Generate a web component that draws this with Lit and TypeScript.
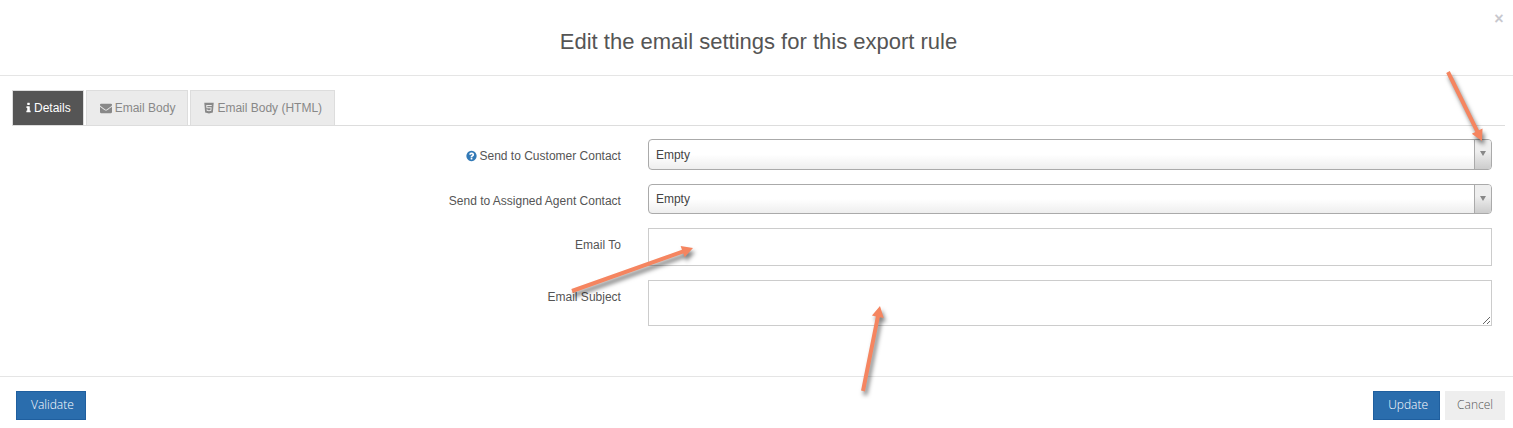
import { LitElement, html, css, svg } from "lit";
import { customElement, state } from "lit/decorators.js";

const icons = {
  info: {
    box: "576 0 640 1792",
    width: 5,
    path: "M1216 1344v128q0 26-19 45t-45 19h-512q-26 0-45-19t-19-45v-128q0-26 19-45t45-19h64v-384h-64q-26 0-45-19t-19-45v-128q0-26 19-45t45-19h384q26 0 45 19t19 45v576h64q26 0 45 19t19 45zm-128-1152v192q0 26-19 45t-45 19h-256q-26 0-45-19t-19-45v-192q0-26 19-45t45-19h256q26 0 45 19t19 45z",
  },
  envelope: {
    box: "0 0 1792 1792",
    width: 12,
    path: "M1792 710v794q0 66-47 113t-113 47h-1472q-66 0-113-47t-47-113v-794q44 49 101 87 362 246 497 345 57 42 92.5 65.5t94.5 48 110 24.5h2q51 0 110-24.500t94.500-48 92.500-65.500q170-123 498-345 57-39 100-87zm0-294q0 79-49 151t-122 123q-376 261-468 325-10 7-42.500 30.500t-54 38-52 32.500-57.500 27-50 9h-2q-23 0-50-9t-57.500-27-52-32.500-54-38-42.500-30.500q-91-64-262-182.500t-205-142.500q-62-42-117-115.500t-55-136.500q0-78 41.500-130t118.500-52h1472q65 0 112.500 47t47.500 113z",
  },
  html5: {
    box: "192 0 1408 1792",
    width: 10,
    path: "M192 128h1408l-128 1438-578 162-574-162zM480 450H1312L1300 590H640L650 800H1285L1240 1290 896 1390 552 1290 535 1090H670L680 1190 896 1250 1112 1190 1140 930H520Z",
  },
  help: {
    box: "128 0 1536 1792",
    width: 11,
    path: "M1024 1376v-192q0-14-9-23t-23-9h-192q-14 0-23 9t-9 23v192q0 14 9 23t23 9h192q14 0 23-9t9-23zm256-672q0-88-55.500-163t-138.500-116-170.500-41q-243 0-371 213-15 24 8 42l132 100q7 6 19 6 16 0 25-12 53-68 86-92 34-24 86-24 48 0 85.500 26t37.500 59q0 38-20 61t-68 45q-63 28-115.500 86.500t-52.500 125.500v36q0 14 9 23t23 9h192q14 0 23-9t9-23q0-19 21.500-49.500t54.500-49.500q32-18 49-28.500t46-35 44.500-48 28-60.500 12.500-81zm384 192q0 209-103 385.500t-279.500 279.500-385.500 103-385.500-103-279.500-279.500-103-385.500 103-385.500 279.500-279.500 385.500-103 385.500 103 279.500 279.500 103 385.500z",
  },
};

type IconName = keyof typeof icons;

const icon = (name: IconName) => html`<svg
  class="icon"
  viewBox=${icons[name].box}
  width=${icons[name].width}
  height="12"
  aria-hidden="true"
>
  <path fill="currentColor" fill-rule="evenodd" d=${icons[name].path} />
</svg>`;

/* Arrow from (x1, y1) to its tip at (x2, y2). */
const arrow = (x1: number, y1: number, x2: number, y2: number) => {
  const length = Math.hypot(x2 - x1, y2 - y1);
  const angle = (Math.atan2(y2 - y1, x2 - x1) * 180) / Math.PI;
  return svg`<path
    fill="#f58560"
    transform="translate(${x1} ${y1}) rotate(${angle})"
    d="M0 -2H${length - 11}V-6L${length} 0L${length - 11} 6V2H0Z"
  />`;
};

const tabs: { icon: IconName; label: string }[] = [
  { icon: "info", label: "Details" },
  { icon: "envelope", label: "Email Body" },
  { icon: "html5", label: "Email Body (HTML)" },
];

@customElement("app-root")
export class AppRoot extends LitElement {
  @state() private active = 0;

  static styles = css`
    :host {
      display: block;
      background: #fff;
      color: #555;
      font: 12px/18px "Liberation Sans", Arial, sans-serif;
    }
    * {
      box-sizing: border-box;
    }
    .header {
      display: grid;
      grid-template-columns: 20px 1fr 20px;
      padding: 10px 4px 19px 8px;
      border-bottom: 1px solid #e5e5e5;
    }
    .title {
      grid-column: 2;
      margin: 17px 0 0;
      font-size: 22px;
      line-height: 29px;
      font-weight: 400;
      text-align: center;
    }
    .close {
      align-self: start;
      justify-self: center;
      padding: 0;
      border: 0;
      background: none;
      color: #c8c8ce;
      font: bold 16px/18px "Liberation Sans", Arial, sans-serif;
    }
    .tabs {
      display: flex;
      gap: 2px;
      margin: 14px 8px 0 12px;
      border-bottom: 1px solid #ddd;
    }
    .tab {
      display: flex;
      align-items: center;
      gap: 3px;
      height: 35px;
      padding: 0 12px 0 13px;
      border: 1px solid #ddd;
      border-bottom: 0;
      background: #ebebeb;
      color: #888;
      font: inherit;
    }
    .tab.active {
      background: #555;
      color: #fff;
    }
    .icon {
      flex: none;
    }
    .form {
      display: grid;
      gap: 14px;
      padding: 13px 21px 50px 18px;
    }
    .row {
      display: grid;
      grid-template-columns: 5fr 7fr;
      column-gap: 27px;
    }
    .label {
      display: flex;
      justify-content: flex-end;
      align-items: center;
      align-self: start;
      gap: 3px;
      padding-top: 8px;
    }
    .help {
      display: flex;
      color: #337ab7;
    }
    .field {
      position: relative;
      display: grid;
    }
    .select,
    .toggle {
      grid-area: 1 / 1;
    }
    .select {
      appearance: none;
      width: 100%;
      height: 30px;
      padding: 0 24px 0 7px;
      border: 1px solid #aaa;
      border-radius: 4px;
      background: linear-gradient(#fff 50%, #eee);
      color: #444;
      font: inherit;
    }
    .tall {
      height: 31px;
    }
    .toggle {
      display: flex;
      justify-content: center;
      justify-self: end;
      width: 17px;
      margin: 1px 1px 1px 0;
      padding-top: 11px;
      border-left: 1px solid #aaa;
      border-radius: 0 3px 3px 0;
      background: linear-gradient(#eee 40%, #ccc);
      pointer-events: none;
      z-index: 1;
    }
    .caret {
      width: 6px;
      height: 5px;
      background: #888;
      clip-path: polygon(0 0, 100% 0, 50% 100%);
    }
    .text {
      width: 100%;
      padding: 6px 12px;
      border: 1px solid #ccc;
      border-radius: 0;
      background: #fff;
      color: #555;
      font: inherit;
    }
    .line {
      height: 38px;
    }
    .area {
      display: block;
      height: 46px;
    }
    .arrow {
      position: absolute;
      overflow: visible;
      z-index: 2;
      pointer-events: none;
      filter: drop-shadow(2px 4px 2px rgba(0, 0, 0, 0.5));
    }
    .to-toggle {
      right: 10px;
      top: -67px;
    }
    .to-line {
      left: -76px;
      top: 20px;
    }
    .to-area {
      left: 215px;
      top: 26px;
    }
    .footer {
      display: flex;
      gap: 5px;
      padding: 14px 8px 8px 16px;
      border-top: 1px solid #e5e5e5;
    }
    .button {
      height: 29px;
      padding: 0 11px 2px 14px;
      border: 1px solid #1f5f9f;
      background: #2a6dad;
      color: #fff;
      font: 300 12px/18px "Open Sans", sans-serif;
    }
    .validate {
      margin-right: auto;
    }
    .cancel {
      padding: 0 11px 2px;
      border-color: #eee;
      background: #eee;
      color: #555;
    }
  `;

  render() {
    return html`
      <header class="header">
        <h1 class="title">Edit the email settings for this export rule</h1>
        <button class="close" aria-label="Close">×</button>
      </header>
      <nav class="tabs" role="tablist">
        ${tabs.map(
          (tab, i) => html`<button
            class="tab ${i === this.active ? "active" : ""}"
            role="tab"
            aria-selected=${i === this.active}
            @click=${() => (this.active = i)}
          >
            ${icon(tab.icon)}<span>${tab.label}</span>
          </button>`
        )}
      </nav>
      <form class="form">
        <div class="row">
          <label class="label" for="customer"
            ><span class="help">${icon("help")}</span>Send to Customer Contact</label
          >
          <div class="field">
            <select class="select tall" id="customer">
              <option>Empty</option>
            </select>
            <span class="toggle"><span class="caret"></span></span>
            <svg class="arrow to-toggle" width="34" height="69" aria-hidden="true">
              ${arrow(0, 0, 34, 69)}
            </svg>
          </div>
        </div>
        <div class="row">
          <label class="label" for="agent">Send to Assigned Agent Contact</label>
          <div class="field">
            <select class="select" id="agent">
              <option>Empty</option>
            </select>
            <span class="toggle"><span class="caret"></span></span>
          </div>
        </div>
        <div class="row">
          <label class="label" for="to">Email To</label>
          <div class="field">
            <input class="text line" id="to" type="text" />
            <svg class="arrow to-line" width="121" height="43" aria-hidden="true">
              ${arrow(0, 43, 121, 0)}
            </svg>
          </div>
        </div>
        <div class="row">
          <label class="label" for="subject">Email Subject</label>
          <div class="field">
            <textarea class="text area" id="subject"></textarea>
            <svg class="arrow to-area" width="17" height="85" aria-hidden="true">
              ${arrow(0, 85, 17, 0)}
            </svg>
          </div>
        </div>
      </form>
      <footer class="footer">
        <button class="button validate">Validate</button>
        <button class="button">Update</button>
        <button class="button cancel">Cancel</button>
      </footer>
    `;
  }
}
